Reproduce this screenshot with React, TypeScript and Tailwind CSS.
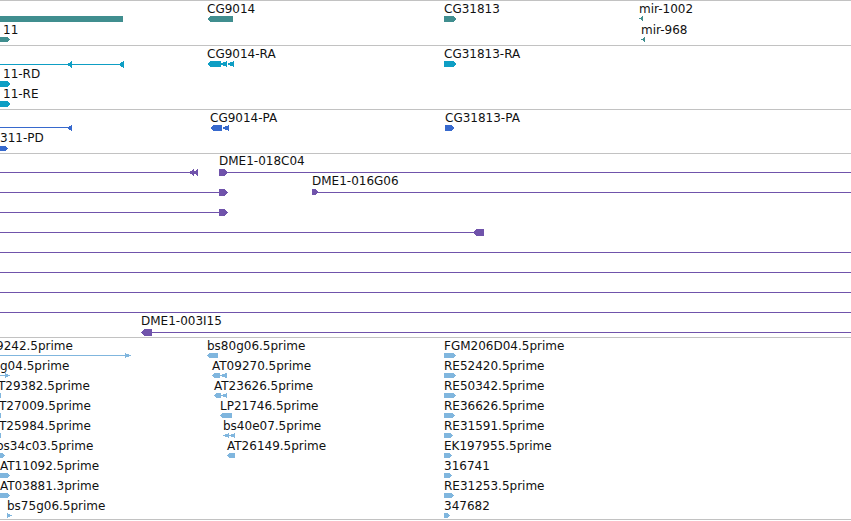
import React from "react";

type Shape = { k: "rect" | "ra" | "la" | "tl" | "tr"; x0: number; x1: number; y: number; h: number };
type Label = { t: string; x: number; y: number };

const S = (k: Shape["k"], x0: number, x1: number, y: number, h: number): Shape => ({ k, x0, x1, y, h });
const L = (t: string, x: number, y: number): Label => ({ t, x, y });

function pts(s: Shape): string {
  const { x0, x1, y, h } = s;
  const m = y + h / 2;
  const b = y + h;
  const t = Math.min(3, (x1 - x0) / 2);
  switch (s.k) {
    case "ra":
      return `${x0},${y} ${x1 - t},${y} ${x1},${m} ${x1 - t},${b} ${x0},${b}`;
    case "la":
      return `${x0},${m} ${x0 + t},${y} ${x1},${y} ${x1},${b} ${x0 + t},${b}`;
    case "tl":
      return `${x0},${m} ${x1},${y} ${x1},${b}`;
    case "tr":
      return `${x0},${y} ${x1},${m} ${x0},${b}`;
    default:
      return `${x0},${y} ${x1},${y} ${x1},${b} ${x0},${b}`;
  }
}

function Track({
  className,
  origin,
  height,
  color,
  shapes,
  labels,
}: {
  className: string;
  origin: number;
  height: number;
  color: string;
  shapes: Shape[];
  labels: Label[];
}) {
  return (
    <div className={`relative shrink-0 overflow-hidden border-t border-[#c2c2c2] ${className}`}>
      <svg
        className="absolute left-0 top-0"
        width={851}
        height={height}
        viewBox={`0 ${origin} 851 ${height}`}
        shapeRendering="crispEdges"
      >
        {shapes.map((s, i) => (
          <polygon key={i} points={pts(s)} fill={color} />
        ))}
      </svg>
      {labels.map((l, i) => (
        <span
          key={i}
          className="absolute whitespace-nowrap font-['DejaVu_Sans',sans-serif] text-[12px] leading-[14px] text-[#111111]"
          style={{ left: l.x, top: l.y - origin }}
        >
          {l.t}
        </span>
      ))}
    </div>
  );
}

const TEAL = "#408e8f";
const CYAN = "#0e9ec4";
const BLUE = "#3769cd";
const PURPLE = "#7053ab";
const LIGHT = "#80b6de";

const t1Shapes: Shape[] = [
  S("rect", 0, 123, 16, 6),
  S("ra", 0, 10, 37, 5),
  S("la", 207, 233, 16, 6),
  S("ra", 444, 456, 16, 6),
  S("tl", 639, 643, 16, 5),
  S("tl", 641, 645, 37, 5),
];
const t1Labels: Label[] = [
  L("CG9014", 207, 2),
  L("11", 3, 23),
  L("CG31813", 444, 2),
  L("mir-1002", 639, 2),
  L("mir-968", 641, 23),
];

const t2Shapes: Shape[] = [
  S("rect", 0, 123, 64, 1),
  S("tl", 67, 72, 61, 7),
  S("tl", 118, 124, 61, 7),
  S("ra", 0, 10, 81, 6),
  S("ra", 0, 10, 101, 6),
  S("la", 207, 221, 61, 6),
  S("tl", 220, 227, 61, 6),
  S("tl", 227, 234, 61, 6),
  S("ra", 444, 456, 61, 6),
];
const t2Labels: Label[] = [
  L("CG9014-RA", 207, 47),
  L("11-RD", 3, 67),
  L("11-RE", 3, 87),
  L("CG31813-RA", 444, 47),
];

const t3Shapes: Shape[] = [
  S("rect", 0, 70, 127, 1),
  S("tl", 67, 72, 125, 6),
  S("ra", 0, 8, 146, 5),
  S("la", 210, 222, 125, 6),
  S("tl", 222, 229, 125, 6),
  S("ra", 445, 454, 125, 6),
];
const t3Labels: Label[] = [
  L("CG9014-PA", 210, 111),
  L("311-PD", 0, 131),
  L("CG31813-PA", 445, 111),
];

const t4Shapes: Shape[] = [
  S("rect", 0, 190, 172, 1),
  S("tl", 189, 194, 169, 7),
  S("tl", 193, 198, 169, 7),
  S("ra", 219, 228, 169, 7),
  S("rect", 227, 851, 172, 1),
  S("rect", 0, 220, 192, 1),
  S("ra", 219, 228, 189, 7),
  S("ra", 312, 318, 189, 6),
  S("rect", 316, 851, 192, 1),
  S("rect", 0, 220, 212, 1),
  S("ra", 219, 228, 209, 7),
  S("rect", 0, 476, 232, 1),
  S("la", 473, 484, 229, 7),
  S("rect", 0, 851, 252, 1),
  S("rect", 0, 851, 272, 1),
  S("rect", 0, 851, 292, 1),
  S("rect", 0, 851, 312, 1),
  S("la", 141, 152, 329, 7),
  S("rect", 150, 851, 332, 1),
];
const t4Labels: Label[] = [
  L("DME1-018C04", 219, 154),
  L("DME1-016G06", 312, 174),
  L("DME1-003I15", 141, 314),
];

const col1: [string, number][] = [
  ["9242.5prime", -4],
  ["g04.5prime", 0],
  ["T29382.5prime", -2],
  ["T27009.5prime", -1],
  ["T25984.5prime", -1],
  ["bs34c03.5prime", -4],
  ["AT11092.5prime", 0],
  ["AT03881.3prime", 0],
  ["bs75g06.5prime", 7],
];
const col2: [string, number][] = [
  ["bs80g06.5prime", 207],
  ["AT09270.5prime", 212],
  ["AT23626.5prime", 214],
  ["LP21746.5prime", 220],
  ["bs40e07.5prime", 223],
  ["AT26149.5prime", 227],
];
const col3: string[] = [
  "FGM206D04.5prime",
  "RE52420.5prime",
  "RE50342.5prime",
  "RE36626.5prime",
  "RE31591.5prime",
  "EK197955.5prime",
  "316741",
  "RE31253.5prime",
  "347682",
];
const col3W = [456, 456, 456, 455, 453, 452, 452, 454, 450];

const t5Labels: Label[] = [
  ...col1.map(([t, x], i) => L(t, x, 339 + 20 * i)),
  ...col2.map(([t, x], i) => L(t, x, 339 + 20 * i)),
  ...col3.map((t, i) => L(t, 444, 339 + 20 * i)),
];

const gy = (i: number) => 353 + 20 * i;
const t5Shapes: Shape[] = [
  S("rect", 0, 128, 355, 1),
  S("tr", 125, 131, 353, 5),
  S("rect", 0, 6, 375, 1),
  S("tr", 5, 10, 373, 5),
  S("rect", 0, 1, gy(2), 5),
  S("rect", 0, 1, gy(3), 5),
  S("rect", 0, 1, gy(4), 5),
  S("ra", 0, 5, gy(5), 5),
  S("ra", 0, 10, gy(6), 5),
  S("ra", 0, 10, gy(7), 5),
  S("tr", 7, 12, gy(8), 5),
  S("la", 207, 218, gy(0), 5),
  S("la", 212, 220, gy(1), 5),
  S("tl", 219, 227, gy(1), 5),
  S("la", 214, 221, gy(2), 5),
  S("tl", 220, 227, gy(2), 5),
  S("la", 220, 232, gy(3), 5),
  S("tl", 223, 229, gy(4), 5),
  S("tl", 228, 235, gy(4), 5),
  S("la", 227, 235, gy(5), 5),
  ...col3W.map((w, i) => S("ra", 444, w, gy(i), 5)),
];

export default function App() {
  return (
    <div className="flex h-[521px] w-[851px] flex-col overflow-hidden bg-white">
      <Track className="h-[45px]" origin={1} height={44} color={TEAL} shapes={t1Shapes} labels={t1Labels} />
      <Track className="h-[64px]" origin={46} height={63} color={CYAN} shapes={t2Shapes} labels={t2Labels} />
      <Track className="h-[44px]" origin={110} height={43} color={BLUE} shapes={t3Shapes} labels={t3Labels} />
      <Track className="h-[184px]" origin={154} height={183} color={PURPLE} shapes={t4Shapes} labels={t4Labels} />
      <Track className="h-[182px]" origin={338} height={181} color={LIGHT} shapes={t5Shapes} labels={t5Labels} />
      <div className="h-[2px] shrink-0 border-t border-[#c2c2c2]" />
    </div>
  );
}
